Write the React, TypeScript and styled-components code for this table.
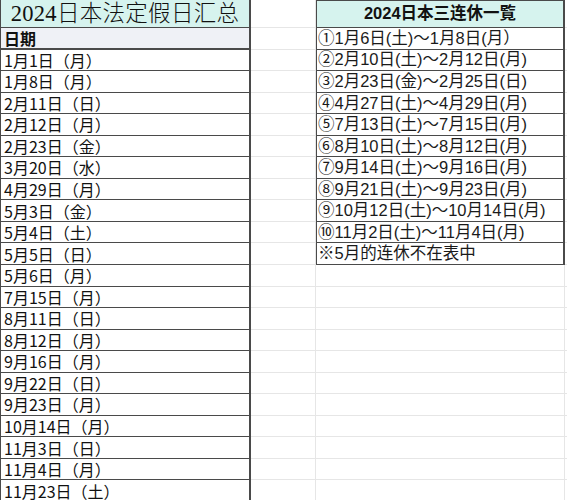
import { createGlobalStyle, styled } from 'styled-components';

const GlobalStyle = createGlobalStyle`
  html, body {
    margin: 0;
    padding: 0;
    background: #ffffff;
  }
  body {
    font-family: "Noto Sans CJK JP", "Noto Sans", sans-serif;
    color: #111;
  }
`;

const ROW_H = 21.55;
const DARK = '#4a4a4a';
const GRID = '#e6e6e6';
const MINT = '#d6f3ee';

// whole spreadsheet: A = holidays, B = spacer, C = long weekends, D = rest
const Sheet = styled.div`
  display: grid;
  grid-template-columns: 251px 65px 249px 1fr;
  grid-template-rows: 28px;
  grid-auto-rows: ${ROW_H}px;
  width: 567px;
  height: 500px;
  overflow: hidden;
`;

type Kind = 'title' | 'head' | 'date' | 'blank' | 'rtitle' | 'range' | 'empty';

const Cell = styled.div<{ $kind: Kind }>`
  box-sizing: border-box;
  display: flex;
  align-items: center;
  white-space: nowrap;
  font-size: 16px;
  line-height: 1.2;
  padding-left: 3px;
  padding-top: 1px;
  border-bottom: 1px solid ${GRID};
  border-right: 1px solid ${GRID};

  ${({ $kind }) => {
    switch ($kind) {
      case 'title':
        return `
          background: ${MINT};
          justify-content: center;
          padding-left: 0;
          padding-top: 0;
          font-family: "Liberation Serif", "Noto Sans CJK SC", serif;
          font-size: 22.5px;
          font-weight: 300;
          letter-spacing: 0.3px;
          border-left: 1px solid ${DARK};
          border-bottom: 1px solid ${DARK};
          border-right: 2px solid ${DARK};
        `;
      case 'head':
        return `
          background: #eff1f6;
          font-weight: 700;
          border-left: 1px solid ${DARK};
          border-bottom: 2px solid ${DARK};
          border-right: 2px solid ${DARK};
        `;
      case 'date':
        return `
          border-left: 1px solid ${DARK};
          border-bottom: 1px solid ${DARK};
          border-right: 2px solid ${DARK};
        `;
      case 'rtitle':
        return `
          background: ${MINT};
          justify-content: center;
          padding-left: 0;
          padding-top: 0;
          font-family: "Liberation Sans", "Noto Sans CJK JP", sans-serif;
          font-weight: 700;
          font-size: 16.5px;
          border-top: 1px solid ${DARK};
          border-left: 1px solid ${DARK};
          border-bottom: 1px solid ${DARK};
          border-right: 2px solid ${DARK};
        `;
      case 'range':
        return `
          padding-left: 1px;
          font-family: "Liberation Sans", "Noto Sans CJK JP", sans-serif;
          font-size: 16.5px;
          color: #1a1a1a;
          border-left: 1px solid ${DARK};
          border-bottom: 1px solid ${DARK};
          border-right: 2px solid ${DARK};
        `;
      case 'empty':
        return `
          border-right: none;
        `;
      default:
        return '';
    }
  }}
`;

const holidays = [
  '1月1日（月）',
  '1月8日（月）',
  '2月11日（日）',
  '2月12日（月）',
  '2月23日（金）',
  '3月20日（水）',
  '4月29日（月）',
  '5月3日（金）',
  '5月4日（土）',
  '5月5日（日）',
  '5月6日（月）',
  '7月15日（月）',
  '8月11日（日）',
  '8月12日（月）',
  '9月16日（月）',
  '9月22日（日）',
  '9月23日（月）',
  '10月14日（月）',
  '11月3日（日）',
  '11月4日（月）',
  '11月23日（土）',
];

const longWeekends = [
  '①1月6日(土)～1月8日(月）',
  '②2月10日(土)～2月12日(月)',
  '③2月23日(金)～2月25日(日)',
  '④4月27日(土)～4月29日(月)',
  '⑤7月13日(土)～7月15日(月)',
  '⑥8月10日(土)～8月12日(月)',
  '⑦9月14日(土)～9月16日(月)',
  '⑧9月21日(土)～9月23日(月)',
  '⑨10月12日(土)～10月14日(月)',
  '⑩11月2日(土)～11月4日(月)',
  '※5月的连休不在表中',
];

export default function App() {
  const left = ['2024日本法定假日汇总', '日期', ...holidays];
  const right = ['2024日本三连休一覧', ...longWeekends];

  return (
    <>
      <GlobalStyle />
      <Sheet>
        {left.map((text, i) => {
          const leftKind: Kind = i === 0 ? 'title' : i === 1 ? 'head' : 'date';
          const rightText = right[i];
          const rightKind: Kind = i === 0 ? 'rtitle' : rightText ? 'range' : 'blank';
          return [
            <Cell key={`a${i}`} $kind={leftKind}>{text}</Cell>,
            <Cell key={`b${i}`} $kind="blank" />,
            <Cell key={`c${i}`} $kind={rightKind}>{rightText}</Cell>,
            <Cell key={`d${i}`} $kind="empty" />,
          ];
        })}
      </Sheet>
    </>
  );
}
